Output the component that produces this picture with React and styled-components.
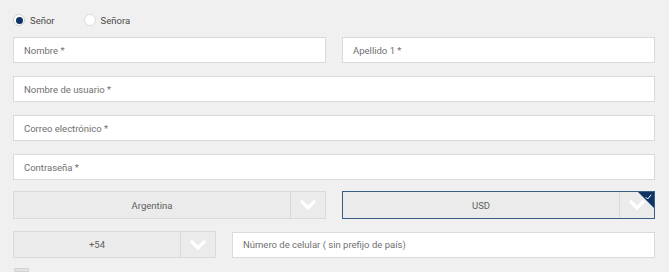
import React from "react";
import styled, { createGlobalStyle } from "styled-components";

const Global = createGlobalStyle`
  body {
    margin: 0;
    background: #f0f0f0;
    font-family: Roboto, "Liberation Sans", Arial, sans-serif;
  }
`;

const Form = styled.div`
  width: 669px;
  height: 272px;
  overflow: hidden;
  box-sizing: border-box;
  padding: 14px 14px 0 13px;
  display: flex;
  flex-direction: column;
`;

const RadioRow = styled.div`
  display: flex;
  align-items: center;
  height: 14px;
  margin-bottom: 11px;
`;

const RadioLabel = styled.label`
  display: flex;
  align-items: center;
  gap: 5px;
  font-size: 9.5px;
  color: #4a4a4a;
  margin-right: 29px;
`;

const RadioDot = styled.span`
  width: 10px;
  height: 10px;
  border-radius: 50%;
  background: #fff;
  border: 1px solid ${p => (p.$checked ? "#cfcfcf" : "#dcdcdc")};
  display: flex;
  align-items: center;
  justify-content: center;
  &::after {
    content: "";
    width: 7px;
    height: 7px;
    border-radius: 50%;
    background: ${p => (p.$checked ? "#0e3466" : "transparent")};
  }
`;

const Rows = styled.div`
  display: flex;
  flex-direction: column;
  gap: 13px;
`;

const Row = styled.div`
  display: flex;
  align-items: center;
  gap: ${p => p.$gap || 16}px;
  margin-top: ${p => p.$top || 0}px;
`;

const Field = styled.div`
  flex: 1 1 0;
  height: ${p => p.$h || 26}px;
  box-sizing: border-box;
  background: #fff;
  border: 1px solid #dadada;
  display: flex;
  align-items: center;
  padding-left: 10px;
  font-size: 9.5px;
  color: #707070;
  white-space: nowrap;
`;

const Select = styled.div`
  position: relative;
  flex: ${p => (p.$w ? `0 0 ${p.$w}px` : "1 1 0")};
  height: ${p => p.$h || 28}px;
  box-sizing: border-box;
  background: #ebebeb;
  border: 1px solid ${p => (p.$active ? "#3a5f87" : "#dadada")};
  display: flex;
  overflow: hidden;
`;

const SelectValue = styled.div`
  flex: 1;
  display: flex;
  align-items: center;
  justify-content: center;
  font-size: 9.5px;
  color: #606060;
`;

const Caret = styled.div`
  width: 34px;
  border-left: 1px solid #d9d9d9;
  display: flex;
  align-items: center;
  justify-content: center;
`;

const Corner = styled.div`
  position: absolute;
  top: 0;
  right: 0;
  width: 0;
  height: 0;
  border-top: 16px solid #0e3466;
  border-left: 16px solid transparent;
`;

const CornerCheck = styled.svg`
  position: absolute;
  top: 2px;
  right: 2px;
`;

const Checkbox = styled.div`
  margin-top: 10px;
  margin-left: 1px;
  width: 13px;
  height: 13px;
  background: #e2e2e2;
  border: 1px solid #d4d4d4;
`;

const Chevron = () => (
  <svg width="16" height="10" viewBox="0 0 16 10">
    <path d="M2 2 L8 8 L14 2" fill="none" stroke="#fff" strokeWidth="3.2" strokeLinecap="square" />
  </svg>
);

export default function App() {
  return (
    <>
      <Global />
      <Form>
        <RadioRow>
          <RadioLabel>
            <RadioDot $checked />
            Señor
          </RadioLabel>
          <RadioLabel>
            <RadioDot />
            Señora
          </RadioLabel>
        </RadioRow>
        <Rows>
          <Row>
            <Field>Nombre *</Field>
            <Field>Apellido 1 *</Field>
          </Row>
          <Row>
            <Field>Nombre de usuario *</Field>
          </Row>
          <Row>
            <Field>Correo electrónico *</Field>
          </Row>
          <Row>
            <Field>Contraseña *</Field>
          </Row>
        </Rows>
        <Row $top={11}>
          <Select>
            <SelectValue>Argentina</SelectValue>
            <Caret>
              <Chevron />
            </Caret>
          </Select>
          <Select $active>
            <SelectValue>USD</SelectValue>
            <Caret>
              <Chevron />
            </Caret>
            <Corner />
            <CornerCheck width="7" height="6" viewBox="0 0 7 6">
              <path d="M0.8 3.2 L2.6 5 L6.2 0.8" fill="none" stroke="#fff" strokeWidth="1" />
            </CornerCheck>
          </Select>
        </Row>
        <Row $top={12} $gap={16}>
          <Select $w={203} $h={27}>
            <SelectValue>+54</SelectValue>
            <Caret>
              <Chevron />
            </Caret>
          </Select>
          <Field>Número de celular ( sin prefijo de país)</Field>
        </Row>
        <Checkbox />
      </Form>
    </>
  );
}
